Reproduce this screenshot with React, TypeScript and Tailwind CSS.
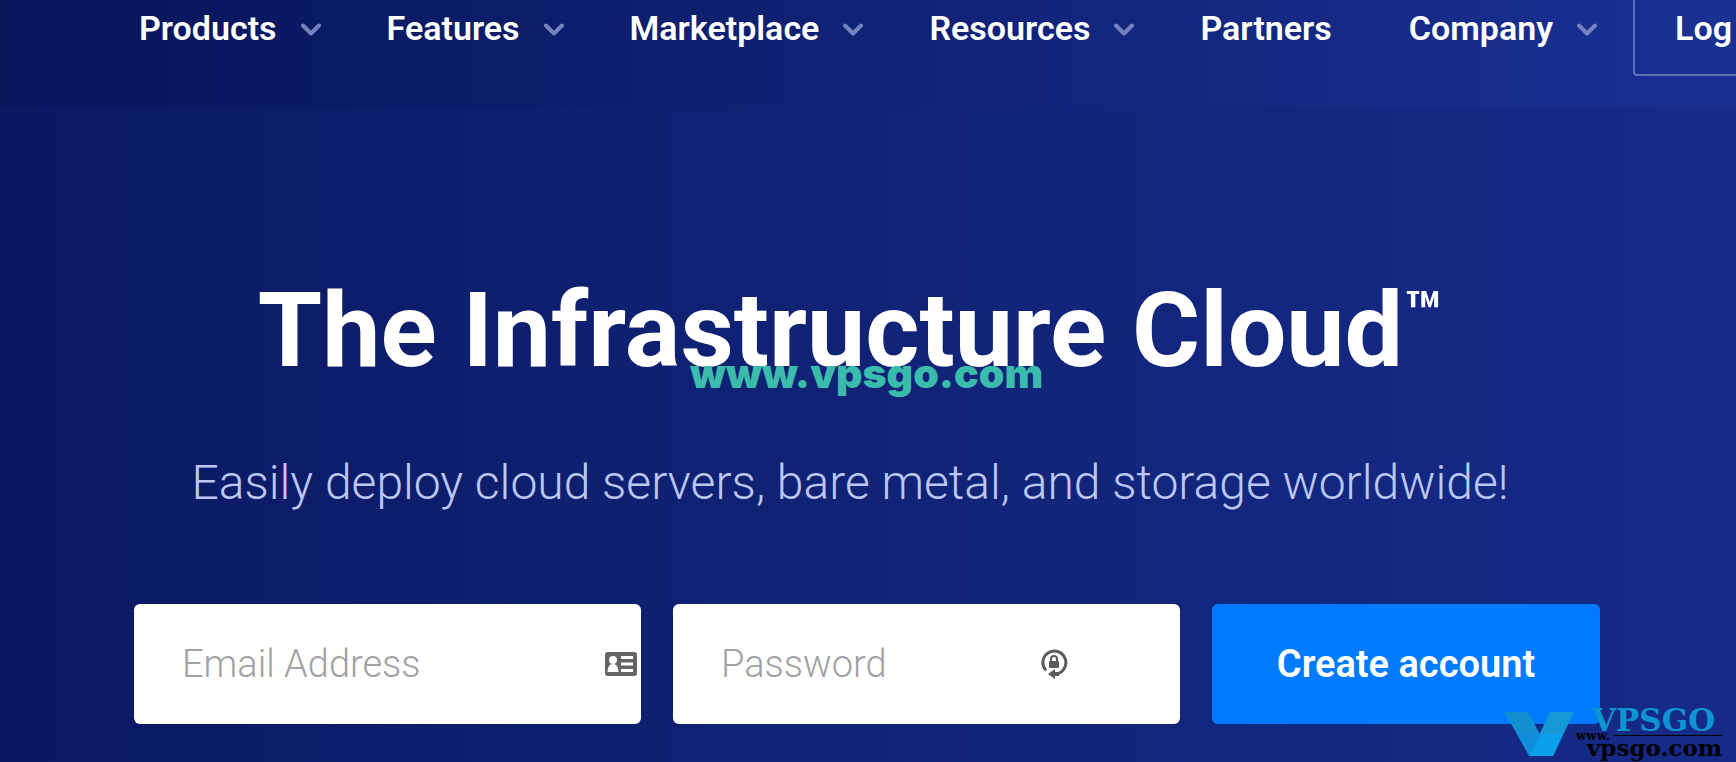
import React from 'react';

interface NavItem {
  label: string;
  hasMenu: boolean;
}

const navItems: NavItem[] = [
  { label: 'Products', hasMenu: true },
  { label: 'Features', hasMenu: true },
  { label: 'Marketplace', hasMenu: true },
  { label: 'Resources', hasMenu: true },
  { label: 'Partners', hasMenu: false },
  { label: 'Company', hasMenu: true },
];

const Chevron: React.FC = () => (
  <svg className="ml-6 mt-1 h-3.5 w-5" viewBox="0 0 20 14" fill="none" stroke="#7482bd" strokeWidth="4" strokeLinecap="round" strokeLinejoin="round">
    <path d="M2 2.5l8 8 8-8" />
  </svg>
);

const ContactCardIcon: React.FC = () => (
  <svg className="absolute right-1 top-12 h-6 w-8" viewBox="0 0 32 24" fill="none">
    <rect width="32" height="24" rx="3" fill="#636363" />
    <circle cx="8" cy="8" r="4" fill="#fff" />
    <path d="M2.5 20c0-5 2-8 5.5-8s5.5 3 5.5 8z" fill="#fff" />
    <path d="M16 5.5h12M16 12h12M16 18.5h12" stroke="#fff" strokeWidth="3" />
  </svg>
);

const PasswordIcon: React.FC = () => (
  <svg className="absolute right-28 top-11 h-8 w-7" viewBox="0 0 28 32" fill="none">
    <path d="M6 22.5A11.5 11.5 0 1 1 16 26" stroke="#5c5c5c" strokeWidth="3" />
    <path d="M8 26l7-5v3h4v4h-4v3z" fill="#5c5c5c" />
    <rect x="9" y="13" width="10" height="7" rx="1" fill="#5c5c5c" />
    <path d="M11 13v-2a3 3 0 0 1 6 0v2" stroke="#5c5c5c" strokeWidth="2" />
  </svg>
);

const Header: React.FC = () => (
  <header className="h-[107px] overflow-hidden bg-linear-to-r from-[#071559] via-[#102275] to-[#1a3194]">
    <nav className="flex h-[76px] items-start whitespace-nowrap pl-[139px] text-[34px] font-semibold leading-10 text-white">
      {navItems.map((item) => (
        <button
          key={item.label}
          type="button"
          className={`mt-2 flex shrink-0 items-center last-of-type:mr-9 ${item.hasMenu ? 'mr-[66px]' : 'mr-[77px]'}`}
        >
          {item.label}
          {item.hasMenu && <Chevron />}
        </button>
      ))}
      <a href="#login" className="h-[76px] shrink-0 rounded-b border-2 border-t-0 border-[#5f70b8] px-10 pt-2">
        Log In
      </a>
    </nav>
  </header>
);

const SignupForm: React.FC = () => (
  <form className="mt-[91px] flex gap-8 pl-[134px] pr-[136px]">
    <div className="relative min-w-0 flex-1">
      <input type="email" aria-label="Email Address" placeholder="Email Address" className="h-[120px] w-full rounded-md bg-white px-12 text-[38px] font-light text-gray-800 placeholder:text-[#a1a1a5]" />
      <ContactCardIcon />
    </div>
    <div className="relative min-w-0 flex-1">
      <input type="password" aria-label="Password" placeholder="Password" className="h-[120px] w-full rounded-md bg-white px-12 text-[38px] font-light text-gray-800 placeholder:text-[#a1a1a5]" />
      <PasswordIcon />
    </div>
    <button type="submit" className="h-[120px] w-[388px] shrink-0 rounded-md bg-[#007bff] text-[38px] font-semibold text-white">
      Create account
    </button>
  </form>
);

const VpsgoLogo: React.FC = () => (
  <div className="absolute bottom-1 right-3 flex h-12 w-[220px] font-['DejaVu_Serif',serif] font-bold">
    <svg className="h-full w-[72px]" viewBox="0 0 72 48">
      <path d="M0 2h24l14 26-12 18z" fill="#1390d0" />
      <path d="M46 2h24L49 46H25z" fill="#1499d6" />
      <path d="M13 24h21l3 5-11 17h-1z" fill="#118edb" />
      <path d="M37 24h22L49 46H25z" fill="#0aa0ec" />
    </svg>
    <span className="absolute left-[88px] top-0 text-[31px] leading-5 text-[#0e94d2]">VPSGO</span>
    <span className="absolute left-[72px] top-5 text-[12px] leading-3 text-black">www.</span>
    <span className="absolute left-[109px] top-[25px] h-px w-[110px] bg-black" />
    <span className="absolute left-[83px] top-7 text-[23px] leading-5 text-black">vpsgo.com</span>
  </div>
);

export default function App() {
  return (
    <div className="relative overflow-hidden bg-linear-to-r from-[#0b1963] via-[#102376] to-[#162b88] pb-[38px] font-[Roboto,sans-serif]">
      <Header />
      <main>
        {/* Headline block is centred slightly left of the form */}
        <div className="pr-9 text-center">
          <h1 className="mt-[164px] h-[120px] whitespace-nowrap text-[104px] font-bold leading-[120px] text-white">
            The Infrastructure Cloud
            <sup className="top-0 align-top text-[62px] leading-[86px]">™</sup>
          </h1>
          <p className="mt-[62px] whitespace-nowrap text-[48px] font-light leading-[60px] text-[#bcc8f3]">
            Easily deploy cloud servers, bare metal, and storage worldwide!
          </p>
        </div>
        <SignupForm />
      </main>
      <span className="absolute left-[690px] top-[348px] font-[Inter,sans-serif] text-[41px] font-black leading-[50px] text-[#3abbab]">
        www.vpsgo.com
      </span>
      <VpsgoLogo />
    </div>
  );
}
